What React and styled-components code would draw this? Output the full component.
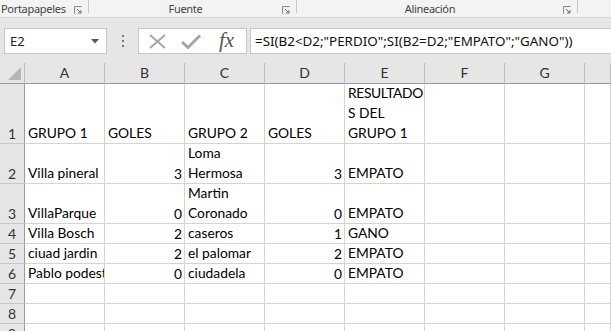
import React from "react";
import styled, { createGlobalStyle } from "styled-components";

const GlobalStyle = createGlobalStyle`
  html, body {
    margin: 0;
    padding: 0;
    background: #e6e6e6;
    overflow: hidden;
  }
`;

const columns = ["A", "B", "C", "D", "E", "F", "G", ""];

const rows = [
  {
    n: 1,
    h: 60,
    cells: [["GRUPO 1"], ["GOLES"], ["GRUPO 2"], ["GOLES"], ["RESULTADO", "S DEL", "GRUPO 1"]],
  },
  { n: 2, h: 40, cells: [["Villa pineral"], 3, ["Loma", "Hermosa"], 3, ["EMPATO"]] },
  { n: 3, h: 40, cells: [["VillaParque"], 0, ["Martin", "Coronado"], 0, ["EMPATO"]] },
  { n: 4, h: 20, cells: [["Villa Bosch"], 2, ["caseros"], 1, ["GANO"]] },
  { n: 5, h: 20, cells: [["ciuad jardin"], 2, ["el palomar"], 2, ["EMPATO"]] },
  { n: 6, h: 20, cells: [["Pablo podestá"], 0, ["ciudadela"], 0, ["EMPATO"]] },
  { n: 7, h: 20, cells: [] },
  { n: 8, h: 20, cells: [] },
  { n: 9, h: 20, cells: [] },
];

const Launcher = () => (
  <LauncherIcon viewBox="0 0 8 8" width="8" height="8">
    <path d="M0.5 7.5V0.5H7.5" fill="none" stroke="#8a8a8a" strokeWidth="1" />
    <path d="M3 3L7 7M7 4V7H4" fill="none" stroke="#6a6a6a" strokeWidth="1" />
  </LauncherIcon>
);

const App = () => {
  return (
    <>
      <GlobalStyle />
      <Page>
        <Ribbon>
          <Group width={89} left>
            <GroupLabel left>Portapapeles</GroupLabel>
            <Launcher />
          </Group>
          <Group width={208}>
            <GroupLabel>Fuente</GroupLabel>
            <Launcher />
          </Group>
          <Group width={281}>
            <GroupLabel>Alineación</GroupLabel>
            <Launcher />
          </Group>
        </Ribbon>

        <FormulaBar>
          <NameBox>
            <span>E2</span>
            <svg width="8" height="5" viewBox="0 0 8 5">
              <path d="M0 0H8L4 4.5Z" fill="#555" />
            </svg>
          </NameBox>
          <Dots>
            <i />
            <i />
            <i />
          </Dots>
          <FxBox>
            <svg width="17" height="15" viewBox="0 0 17 15">
              <path d="M1 1L16 14M16 1L1 14" stroke="#a6a6a6" strokeWidth="2" fill="none" />
            </svg>
            <svg width="20" height="15" viewBox="0 0 20 15">
              <path d="M1 8L7 13.5L19 1.5" stroke="#a6a6a6" strokeWidth="3" fill="none" />
            </svg>
            <Fx>fx</Fx>
          </FxBox>
          <FormulaInput>=SI(B2&lt;D2;"PERDIO";SI(B2=D2;"EMPATO";"GANO"))</FormulaInput>
        </FormulaBar>

        <Sheet>
          <Corner>
            <svg width="13" height="13" viewBox="0 0 13 13">
              <path d="M13 0V13H0Z" fill="#b5b5b5" />
            </svg>
          </Corner>
          {columns.map((c, i) => (
            <ColHead key={i}>{c}</ColHead>
          ))}
          {rows.map((r) => (
            <React.Fragment key={r.n}>
              <RowHead h={r.h}>{r.n}</RowHead>
              {columns.map((c, i) => {
                const v = r.cells[i];
                if (typeof v === "number") {
                  return (
                    <Cell key={i} h={r.h} num>
                      {v}
                    </Cell>
                  );
                }
                return (
                  <Cell key={i} h={r.h}>
                    {v && v.map((line, k) => <Line key={k}>{line}</Line>)}
                  </Cell>
                );
              })}
            </React.Fragment>
          ))}
        </Sheet>
      </Page>
    </>
  );
};

const Page = styled.div`
  width: 611px;
  height: 331px;
  overflow: hidden;
  background: #e6e6e6;
  font-family: "Noto Sans", "Open Sans", sans-serif;
`;

const Ribbon = styled.div`
  display: flex;
  height: 17px;
  background: #f3f3f3;
  border-bottom: 1px solid #d2d2d2;
`;

const Group = styled.div`
  display: flex;
  align-items: center;
  width: ${(p) => p.width}px;
  flex-shrink: 0;
  position: relative;
  box-sizing: border-box;
  padding-right: 3px;
  &::after {
    content: "";
    position: absolute;
    right: 0;
    top: 0;
    height: 13px;
    width: 1px;
    background: #c8c8c8;
  }
`;

const GroupLabel = styled.div`
  flex: 1;
  text-align: ${(p) => (p.left ? "left" : "center")};
  padding-left: ${(p) => (p.left ? "1px" : "0")};
  font-size: 11px;
  letter-spacing: -0.3px;
  color: #444;
  white-space: nowrap;
  line-height: 16px;
`;

const LauncherIcon = styled.svg`
  margin-right: 4px;
  margin-top: 2px;
`;

const FormulaBar = styled.div`
  display: flex;
  align-items: stretch;
  height: 26px;
  margin-top: 10px;
  margin-bottom: 9px;
`;

const NameBox = styled.div`
  box-sizing: border-box;
  width: 103px;
  margin-left: 4px;
  background: #fff;
  border: 1px solid #c6c6c6;
  display: flex;
  align-items: center;
  justify-content: space-between;
  padding: 0 7px 0 5px;
  font-size: 13px;
  color: #222;
`;

const Dots = styled.div`
  width: 31px;
  display: flex;
  flex-direction: column;
  align-items: center;
  justify-content: center;
  gap: 3px;
  i {
    width: 2px;
    height: 2px;
    background: #777;
  }
`;

const FxBox = styled.div`
  box-sizing: border-box;
  width: 109px;
  background: #fff;
  border: 1px solid #c6c6c6;
  display: flex;
  align-items: center;
  padding-left: 10px;
  gap: 15px;
`;

const Fx = styled.span`
  font-family: "Liberation Serif", "DejaVu Serif", serif;
  font-style: italic;
  font-size: 21px;
  color: #555;
  margin-left: 3px;
  line-height: 1;
  margin-top: -2px;
`;

const FormulaInput = styled.div`
  flex: 1;
  margin-left: 3px;
  box-sizing: border-box;
  background: #fff;
  border: 1px solid #c6c6c6;
  border-right: none;
  display: flex;
  align-items: center;
  padding-left: 4px;
  font-size: 13.4px;
  color: #111;
  white-space: nowrap;
  overflow: hidden;
`;

const Sheet = styled.div`
  display: grid;
  grid-template-columns: 25px repeat(7, 80px) 1fr;
  grid-auto-rows: auto;
  background: #fff;
  font-family: "Lato", "Noto Sans", sans-serif;
`;

const Corner = styled.div`
  height: 21px;
  box-sizing: border-box;
  background: #e6e6e6;
  border-right: 1px solid #bdbdbd;
  border-bottom: 1px solid #9b9b9b;
  display: flex;
  align-items: flex-end;
  justify-content: flex-end;
  padding: 0 3px 3px 0;
`;

const ColHead = styled.div`
  height: 21px;
  box-sizing: border-box;
  background: #e6e6e6;
  border-right: 1px solid #bdbdbd;
  border-bottom: 1px solid #9b9b9b;
  text-align: center;
  font-size: 14px;
  line-height: 20px;
  color: #333;
`;

const RowHead = styled.div`
  height: ${(p) => p.h}px;
  box-sizing: border-box;
  background: #e6e6e6;
  border-right: 1px solid #9b9b9b;
  border-bottom: 1px solid #c8c8c8;
  display: flex;
  align-items: flex-end;
  justify-content: center;
  font-size: 14px;
  line-height: 19px;
  color: #333;
`;

const Cell = styled.div`
  height: ${(p) => p.h}px;
  box-sizing: border-box;
  border-right: 1px solid #d4d4d4;
  border-bottom: 1px solid #d4d4d4;
  display: flex;
  flex-direction: column;
  justify-content: flex-end;
  align-items: ${(p) => (p.num ? "flex-end" : "flex-start")};
  padding: 0 2px 0 3px;
  overflow: hidden;
  font-size: 13.8px;
  line-height: 19.5px;
  color: #000;
  white-space: nowrap;
`;

const Line = styled.div`
  line-height: 20px;
  letter-spacing: ${(p) => (p.children === "RESULTADO" ? "-0.35px" : "0")};
`;

export default App;
